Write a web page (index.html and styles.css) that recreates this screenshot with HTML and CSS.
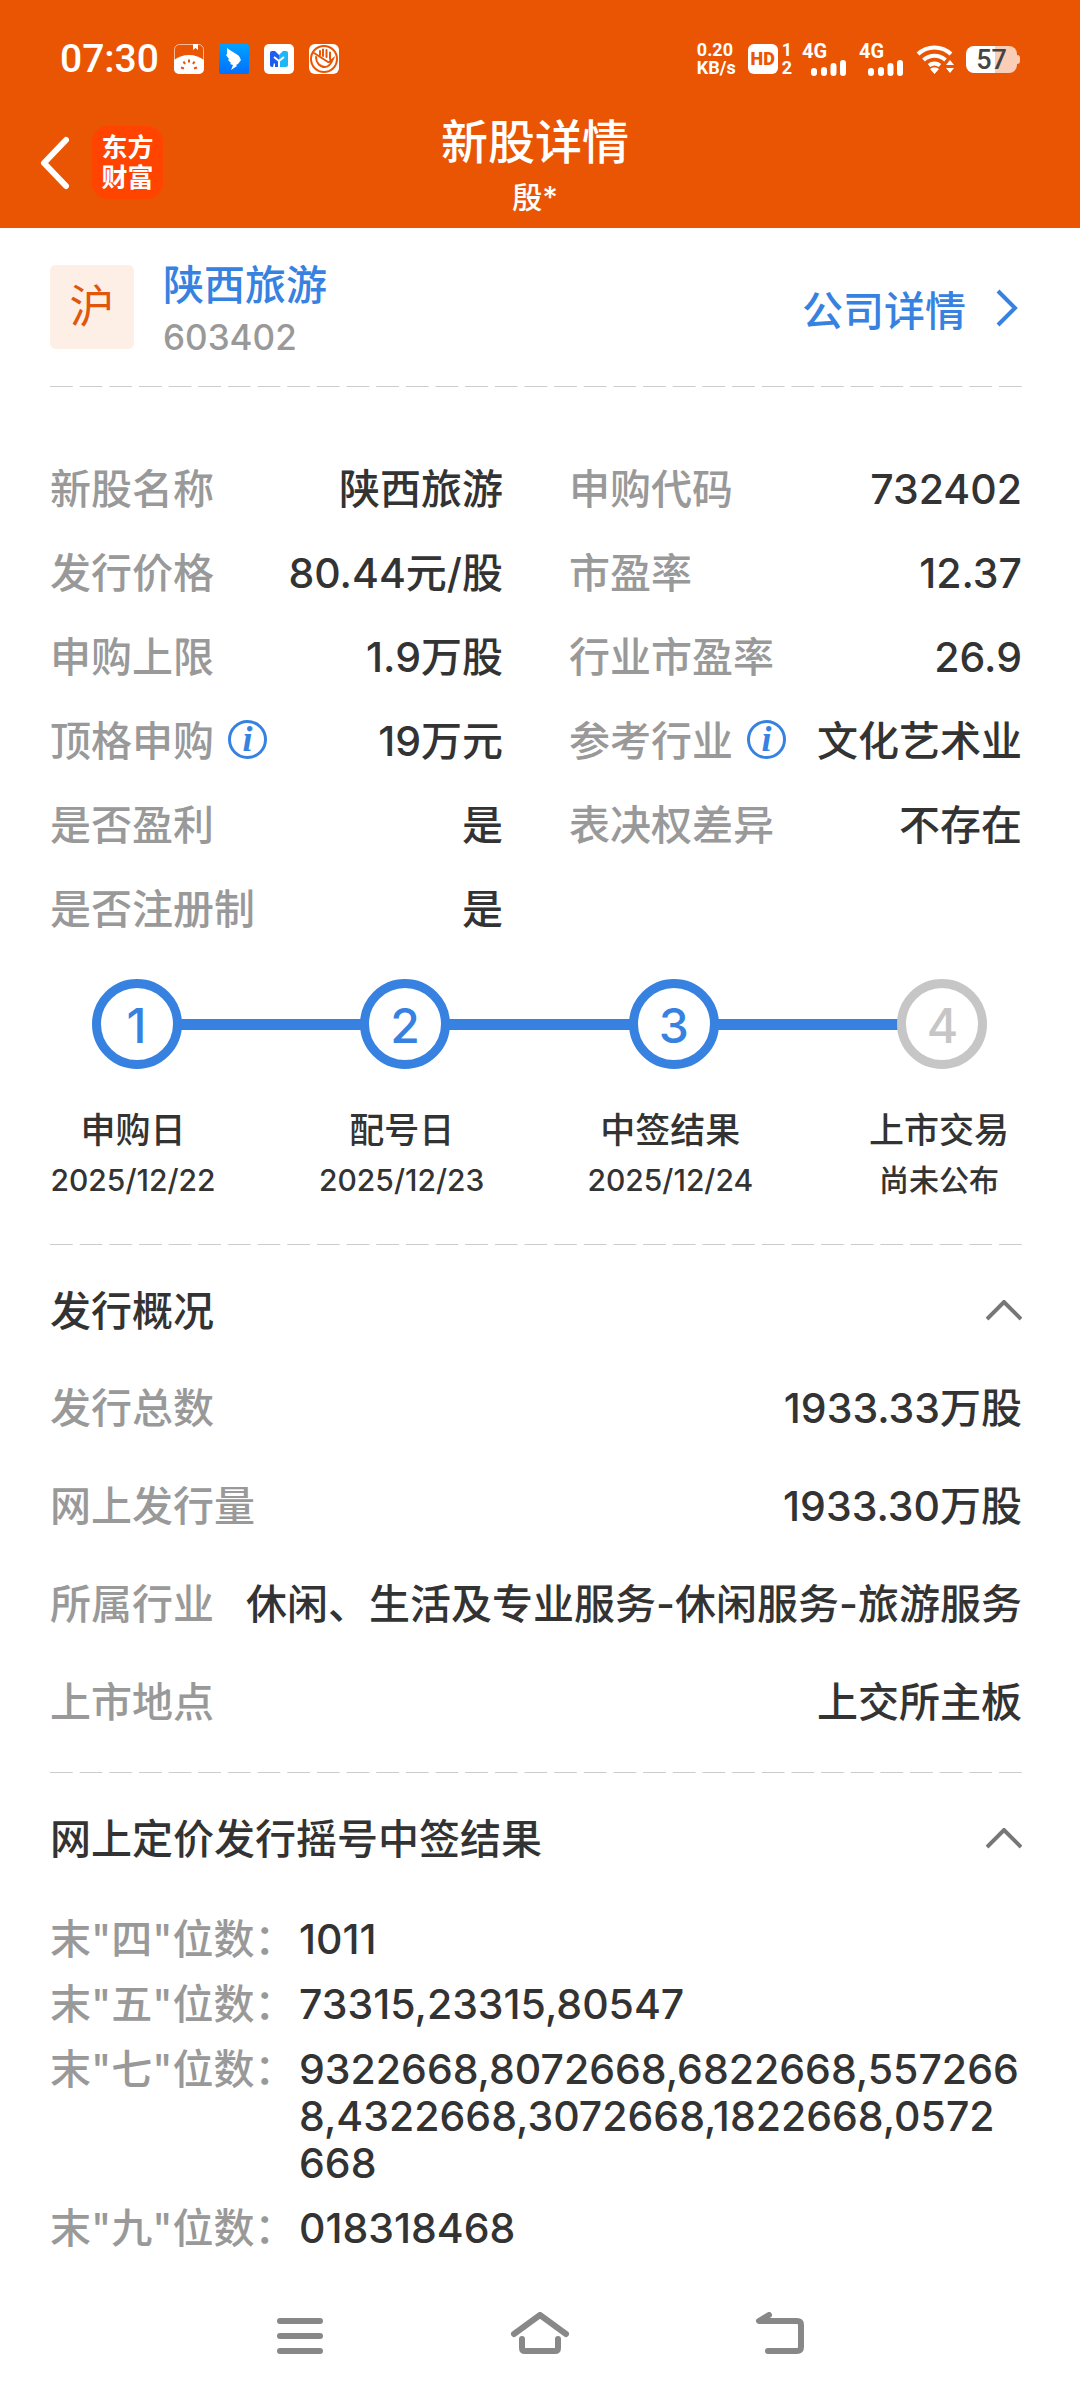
FILE: index.html
```html
<!DOCTYPE html>
<html lang="zh-CN">
<head>
  <meta charset="UTF-8">
  <meta name="viewport" content="width=device-width, initial-scale=1.0">
  <title>新股详情</title>
  <link rel="stylesheet" href="styles.css">
</head>
<body>

  <header class="header">
    <div class="status-bar">
      <div class="status-left">
        <span class="clock">07:30</span>
        <svg class="app-icon" viewBox="0 0 30 30">
          <rect x="0.5" y="0.5" width="29" height="29" rx="5" fill="none" stroke="#fff" stroke-opacity="0.6"/>
          <path d="M0 16C4 13 9 11 15 11s11 2 15 5v9a5 5 0 0 1-5 5H5a5 5 0 0 1-5-5z" fill="#fff"/>
          <path d="M19 0h5v6l-2.500-2L19 6z" fill="#fff"/>
          <path d="M15 15.500v3M9.500 17.500l1.500 2.500M20.500 17.500L19 20M7 23.500l3 1M23 23.500l-3 1" stroke="#ea5504" stroke-width="2"/>
        </svg>
        <svg class="app-icon" viewBox="0 0 30 30">
          <defs>
            <linearGradient id="sky" x1="0" y1="0" x2="0" y2="1">
              <stop offset="0" stop-color="#00a2ff"/>
              <stop offset="1" stop-color="#0070ff"/>
            </linearGradient>
          </defs>
          <rect width="30" height="30" rx="2" fill="url(#sky)"/>
          <path d="M8 4c3 3 9 5 12 8l2 4-3 4-2 1 1 1-6 4 2-5-3-1 1-1-3-3 1-1-3-4 1-1z" fill="#fff"/>
        </svg>
        <svg class="app-icon" viewBox="0 0 30 30">
          <rect width="30" height="30" rx="5" fill="#fff"/>
          <path d="M6 9a2 2 0 0 1 2-2h3l4 4v12h-4v-3l-1-1-1 4H8a2 2 0 0 1-2-2z" fill="#1c5cf0"/>
          <path d="M24 9a2 2 0 0 0-2-2h-3l-4 4v12h7a2 2 0 0 0 2-2z" fill="#1fb6f5"/>
          <path d="M10 13l5 4 5-4M15 17v6" fill="none" stroke="#fff" stroke-width="2"/>
        </svg>
        <svg class="app-icon" viewBox="0 0 30 30">
          <rect width="30" height="30" rx="6" fill="#fff"/>
          <circle cx="15" cy="15" r="13" fill="none" stroke="#ea5504" stroke-width="2"/>
          <path d="M11 11V7M14 12V5.500M17.500 13V6M21 15V8.500M5 9l14 9M7 13c0 6 4 10 9 10 4 0 6-3 8-8l-4 3" fill="none" stroke="#ea5504" stroke-width="2" stroke-linecap="round"/>
        </svg>
      </div>
      <div class="status-right">
        <span class="net-speed">0.20<br>KB/s</span>
        <span class="hd"><b>HD</b></span>
        <span class="sims">1<br>2</span>
        <span class="signal">4G
          <svg class="bars" viewBox="0 0 36 16"><path d="M3 11v2M13 10v3M22.500 6v7M32 3v10" stroke="#fff" stroke-width="6" stroke-linecap="round"/></svg>
        </span>
        <span class="signal">4G
          <svg class="bars" viewBox="0 0 36 16"><path d="M3 11v2M13 10v3M22.500 6v7M32 3v10" stroke="#fff" stroke-width="6" stroke-linecap="round"/></svg>
        </span>
        <svg class="wifi" viewBox="0 0 38 30">
          <path d="M2 10a24 24 0 0 1 33 0M7.500 16a16.500 16.500 0 0 1 22 0M13 21.500a9 9 0 0 1 11 0" fill="none" stroke="#fff" stroke-width="4"/>
          <path d="M14 25a7 7 0 0 1 9 0l-4.500 5zM34 16l4 5h-8zM34 29l-4-5h8z" fill="#fff"/>
        </svg>
        <span class="battery">57</span>
      </div>
    </div>
    <div class="title-bar">
      <div class="title-side">
        <button class="back" aria-label="返回">
          <svg viewBox="0 0 30 54"><path d="M26 4L4 27l22 23" fill="none" stroke="#fff" stroke-width="6" stroke-linecap="round" stroke-linejoin="round"/></svg>
        </button>
        <div class="brand">东方<br>财富</div>
      </div>
      <div class="title-text">
        <h1>新股详情</h1>
        <p>殷*</p>
      </div>
    </div>
  </header>

  <main>
    <section class="company dashed">
      <span class="market">沪</span>
      <div class="company-name">
        <a href="#stock">陕西旅游</a>
        <span>603402</span>
      </div>
      <a class="company-link" href="#company">公司详情
        <svg viewBox="0 0 22 38"><path d="M2 2l17 17L2 36" fill="none" stroke="#3782e0" stroke-width="4"/></svg>
      </a>
    </section>

    <section class="facts-section dashed">
      <dl class="facts">
        <div><dt>新股名称</dt><dd>陕西旅游</dd></div>
        <div><dt>申购代码</dt><dd>732402</dd></div>
        <div><dt>发行价格</dt><dd>80.44元/股</dd></div>
        <div><dt>市盈率</dt><dd>12.37</dd></div>
        <div><dt>申购上限</dt><dd>1.9万股</dd></div>
        <div><dt>行业市盈率</dt><dd>26.9</dd></div>
        <div>
          <dt>顶格申购<button class="info" aria-label="说明">i</button></dt>
          <dd>19万元</dd>
        </div>
        <div>
          <dt>参考行业<button class="info" aria-label="说明">i</button></dt>
          <dd>文化艺术业</dd>
        </div>
        <div><dt>是否盈利</dt><dd>是</dd></div>
        <div><dt>表决权差异</dt><dd>不存在</dd></div>
        <div><dt>是否注册制</dt><dd>是</dd></div>
      </dl>

      <ol class="steps">
        <li>
          <div class="dot">1</div>
          <b>申购日</b>
          <span>2025/12/22</span>
        </li>
        <li>
          <div class="dot">2</div>
          <b>配号日</b>
          <span>2025/12/23</span>
        </li>
        <li>
          <div class="dot">3</div>
          <b>中签结果</b>
          <span>2025/12/24</span>
        </li>
        <li>
          <div class="dot pending">4</div>
          <b>上市交易</b>
          <span>尚未公布</span>
        </li>
      </ol>
    </section>

    <section class="overview dashed">
      <h2>
        <button class="toggle">发行概况
          <svg viewBox="0 0 36 22"><path d="M1 19L18 2l17 17" fill="none" stroke="#777" stroke-width="4"/></svg>
        </button>
      </h2>
      <dl>
        <div><dt>发行总数</dt><dd>1933.33万股</dd></div>
        <div><dt>网上发行量</dt><dd>1933.30万股</dd></div>
        <div><dt>所属行业</dt><dd>休闲、生活及专业服务-休闲服务-旅游服务</dd></div>
        <div><dt>上市地点</dt><dd>上交所主板</dd></div>
      </dl>
    </section>

    <section class="results">
      <h2>
        <button class="toggle">网上定价发行摇号中签结果
          <svg viewBox="0 0 36 22"><path d="M1 19L18 2l17 17" fill="none" stroke="#777" stroke-width="4"/></svg>
        </button>
      </h2>
      <dl>
        <div><dt>末"四"位数：</dt><dd>1011</dd></div>
        <div><dt>末"五"位数：</dt><dd>73315,23315,80547</dd></div>
        <div><dt>末"七"位数：</dt><dd>9322668,8072668,6822668,5572668,4322668,3072668,1822668,0572<br>668</dd></div>
        <div><dt>末"九"位数：</dt><dd>018318468</dd></div>
      </dl>
    </section>
  </main>

  <nav class="nav-bar">
    <button aria-label="菜单">
      <svg viewBox="0 0 60 48"><path d="M10 9h40M10 24h40M10 39h40"/></svg>
    </button>
    <button aria-label="主页">
      <svg viewBox="0 0 60 48"><path d="M4 22L30 3l26 19M12 27v9q0 3 3 3h30q3 0 3-3v-9"/></svg>
    </button>
    <button aria-label="后退">
      <svg viewBox="0 0 60 48"><path d="M19 3L9 9h38q4 0 4 4v22q0 4-4 4H18"/></svg>
    </button>
  </nav>

</body>
</html>
```

FILE: styles.css
```css
* {
  box-sizing: border-box;
}

body {
  margin: 0;
  min-height: 100vh;
  display: flex;
  flex-direction: column;
  font-family: Inter, "Noto Sans CJK SC", sans-serif;
  font-size: 41px;
  font-weight: 500;
  color: #333;
  background-color: #fff;
}

h1, h2, p, dl, dd, ol {
  margin: 0;
  padding: 0;
}

h1, h2, b {
  font-weight: 500;
}

button {
  padding: 0;
  border: none;
  background: none;
  color: inherit;
  font: inherit;
  cursor: pointer;
}

a {
  color: #3782e0;
  text-decoration: none;
}

svg {
  display: block;
  flex: none;
}

/* header */
.header {
  background-color: #ea5504;
  color: #fff;
}

.status-bar {
  display: flex;
  justify-content: space-between;
  align-items: center;
  height: 112px;
  padding: 6px 60px 0 60px;
  font-family: Roboto, sans-serif;
}

.status-left, .status-right {
  display: flex;
  align-items: center;
}

.status-left {
  gap: 15px;
}

.clock {
  font-size: 39px;
  line-height: 40px;
}

.app-icon {
  width: 30px;
  height: 30px;
}

.status-right {
  gap: 12px;
  font-weight: 700;
}

.net-speed {
  font-size: 18px;
  line-height: 18px;
}

.hd {
  width: 30px;
  height: 30px;
  border-radius: 6px;
  background-color: #fff;
  color: #ea5504;
  font-size: 18px;
  line-height: 30px;
  text-align: center;
}

.hd b {
  font-weight: 900;
}

.sims {
  margin: 0 -2px 0 -8px;
  font-size: 18px;
  line-height: 18px;
}

.signal {
  width: 45px;
  height: 32px;
  font-size: 20px;
  line-height: 17px;
}

.bars {
  width: 36px;
  height: 16px;
  margin-left: 9px;
}

.wifi {
  width: 38px;
  height: 30px;
}

.battery {
  position: relative;
  width: 51px;
  height: 27px;
  margin-right: 3px;
  border-radius: 8px;
  background: linear-gradient(to right, #fff 57%, #f9cdb6 57%);
  color: #444;
  font-size: 27px;
  font-weight: 500;
  line-height: 28px;
  text-align: center;
}

.battery::after {
  content: "";
  position: absolute;
  top: 9px;
  right: -3px;
  width: 3px;
  height: 9px;
  border-radius: 0 3px 3px 0;
  background-color: #f9cdb6;
}

.title-bar {
  display: grid;
  grid-template-columns: 1fr auto 1fr;
  padding: 0 50px 6px 40px;
}

.title-side {
  display: flex;
  align-items: center;
  align-self: start;
  gap: 22px;
  padding-top: 14px;
}

.back svg {
  width: 30px;
  height: 54px;
}

.brand {
  width: 71px;
  height: 73px;
  padding-top: 7px;
  border-radius: 16px;
  background-color: #ff4400;
  font-size: 26px;
  font-weight: 700;
  line-height: 30px;
  text-align: center;
}

.title-text {
  text-align: center;
}

.title-text h1 {
  font-size: 47px;
  line-height: 60px;
}

.title-text p {
  font-size: 30px;
  line-height: 50px;
}

/* content */
main {
  padding: 0 58px 0 50px;
}

.dashed {
  background-image: linear-gradient(to right, #ccc 23px, transparent 23px);
  background-size: calc((100% + 7px) / 33) 1px;
  background-repeat: repeat-x;
  background-position: left bottom;
}

.company {
  display: flex;
  align-items: center;
  padding: 37px 0 38px;
}

.market {
  width: 84px;
  height: 84px;
  border-radius: 6px;
  background-color: #fdeee6;
  color: #e0560d;
  font-size: 45px;
  font-weight: 400;
  line-height: 84px;
  text-align: center;
}

.company-name {
  display: flex;
  flex-direction: column;
  height: 84px;
  margin-left: 29px;
  line-height: 52px;
  margin-top: -12px;
}

.company-name span {
  color: #999;
  font-size: 35px;
}

.company-link {
  display: flex;
  align-items: center;
  gap: 30px;
  margin-left: auto;
  padding: 2px 4px 0 0;
}

.company-link svg {
  width: 22px;
  height: 38px;
}

dt {
  color: #999;
}

.facts-section {
  padding: 60px 0 40px;
}

.facts {
  display: grid;
  grid-template-columns: 1fr 1fr;
  column-gap: 66px;
  line-height: 84px;
}

.facts div, .overview dl div {
  display: flex;
  justify-content: space-between;
}

.facts dt {
  display: flex;
  align-items: center;
}

.info {
  width: 39px;
  height: 39px;
  margin: 0 0 4px 14px;
  border: 3px solid #3782e0;
  border-radius: 50%;
  color: #3782e0;
  font-family: "Liberation Serif", serif;
  font-size: 36px;
  font-style: italic;
  font-weight: 700;
  line-height: 30px;
}

.steps {
  display: flex;
  justify-content: space-between;
  margin-top: 28px;
  list-style: none;
}

.steps li {
  display: flex;
  flex-direction: column;
  align-items: center;
  width: 166px;
  white-space: nowrap;
  line-height: 50px;
}

.dot {
  position: relative;
  width: 90px;
  height: 90px;
  margin: 0 0 36px 7px;
  border: 9px solid #3782e0;
  border-radius: 50%;
  background-color: #fff;
  color: #3782e0;
  font-size: 48px;
  line-height: 76px;
  text-align: center;
}

/* blue bar running to the next circle */
.steps li:not(:last-child) .dot::after {
  content: "";
  position: absolute;
  top: 31px;
  left: 80px;
  width: calc((100vw - 274px) / 3 - 88px);
  height: 11px;
  background-color: #3782e0;
}

.dot.pending {
  border-color: #c6c6c6;
  color: #c6c6c6;
}

.steps b {
  font-size: 35px;
}

.steps span {
  font-size: 30px;
}

.toggle {
  display: flex;
  justify-content: space-between;
  align-items: center;
  width: 100%;
  line-height: 84px;
}

.toggle svg {
  width: 36px;
  height: 22px;
}

h2 {
  padding: 24px 0 6px;
  font-size: 41px;
}

.overview {
  padding-bottom: 22px;
}

.overview dl {
  line-height: 98px;
}

.results dl {
  display: grid;
  row-gap: 18px;
  padding-top: 29px;
  line-height: 47px;
}

.results dl div {
  display: grid;
  grid-template-columns: 249px 1fr;
}

.results dt {
  white-space: nowrap;
}

.results dd {
  word-break: break-all;
}

/* system navigation */
.nav-bar {
  display: flex;
  height: 128px;
  margin-top: auto;
  padding: 0 180px;
}

.nav-bar button {
  flex: 1;
  display: flex;
  justify-content: center;
  align-items: center;
}

.nav-bar svg {
  width: 60px;
  height: 48px;
  fill: none;
  stroke: #888;
  stroke-width: 6;
  stroke-linecap: round;
  stroke-linejoin: round;
}
```
